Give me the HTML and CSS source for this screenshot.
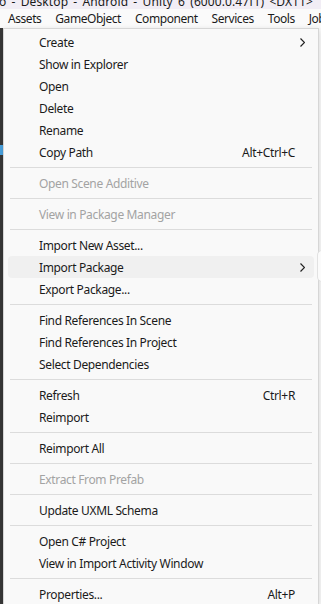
FILE: index.html
```html
<!DOCTYPE html>
<html>
<head>
<meta charset="utf-8">
<link rel="stylesheet" href="styles.css">
</head>
<body>
<div class="title"><span class="title-text">o - Desktop - Android - Unity 6 (6000.0.47f1) &lt;DX11&gt;</span></div>
<div class="menubar">
  <span class="mb-item">Assets</span>
  <span class="mb-item">GameObject</span>
  <span class="mb-item">Component</span>
  <span class="mb-item">Services</span>
  <span class="mb-item">Tools</span>
  <span class="mb-item">Jobs</span>
</div>
<div class="area">
  <div class="strip"><div class="strip-blue"></div></div>
  <div class="menu">
    <div class="item"><span class="label">Create</span><span class="sc"></span><span class="arrow"><svg width="5" height="9" viewBox="0 0 5 9"><polyline points="0.5,0.5 4.5,4.5 0.5,8.5" fill="none" stroke="#222" stroke-width="1.2"/></svg></span></div>
    <div class="item"><span class="label">Show in Explorer</span></div>
    <div class="item"><span class="label">Open</span></div>
    <div class="item"><span class="label">Delete</span></div>
    <div class="item"><span class="label">Rename</span></div>
    <div class="item"><span class="label">Copy Path</span><span class="sc">Alt+Ctrl+C</span><span class="arrow"></span></div>
    <div class="sep"></div>
    <div class="item disabled"><span class="label">Open Scene Additive</span></div>
    <div class="sep"></div>
    <div class="item disabled"><span class="label">View in Package Manager</span></div>
    <div class="sep"></div>
    <div class="item"><span class="label">Import New Asset...</span></div>
    <div class="item hover"><span class="label">Import Package</span><span class="sc"></span><span class="arrow"><svg width="5" height="9" viewBox="0 0 5 9"><polyline points="0.5,0.5 4.5,4.5 0.5,8.5" fill="none" stroke="#222" stroke-width="1.2"/></svg></span><span class="submenu-edge"></span></div>
    <div class="item"><span class="label">Export Package...</span></div>
    <div class="sep"></div>
    <div class="item"><span class="label">Find References In Scene</span></div>
    <div class="item"><span class="label">Find References In Project</span></div>
    <div class="item"><span class="label">Select Dependencies</span></div>
    <div class="sep"></div>
    <div class="item"><span class="label">Refresh</span><span class="sc">Ctrl+R</span><span class="arrow"></span></div>
    <div class="item"><span class="label">Reimport</span></div>
    <div class="sep"></div>
    <div class="item"><span class="label">Reimport All</span></div>
    <div class="sep"></div>
    <div class="item disabled"><span class="label">Extract From Prefab</span></div>
    <div class="sep"></div>
    <div class="item"><span class="label">Update UXML Schema</span></div>
    <div class="sep"></div>
    <div class="item"><span class="label">Open C# Project</span></div>
    <div class="item"><span class="label">View in Import Activity Window</span></div>
    <div class="sep"></div>
    <div class="item"><span class="label">Properties...</span><span class="sc">Alt+P</span><span class="arrow"></span></div>
  </div>
</div>
</body>
</html>
```
FILE: styles.css
```css
html, body {
  margin: 0;
  padding: 0;
}
body {
  width: 321px;
  height: 604px;
  overflow: hidden;
  background: #f9f9f9;
  font-family: "Noto Sans", "Open Sans", sans-serif;
  font-size: 12px;
  color: #1b1b1b;
}
.title {
  height: 9px;
  overflow: hidden;
  background: #f1edf5;
  display: flex;
  align-items: flex-end;
  white-space: nowrap;
}
.title-text {
  display: block;
  line-height: 16px;
  margin-bottom: -1px;
  margin-left: -1px;
  font-size: 12px;
  word-spacing: 2px;
  letter-spacing: 0.1px;
}
.menubar {
  height: 19px;
  background: #fafafa;
  display: flex;
  align-items: center;
  white-space: nowrap;
  padding-left: 1px;
  letter-spacing: -0.45px;
}
.mb-item {
  padding: 0 7px;
  line-height: 19px;
}
.area {
  display: flex;
  height: 576px;
}
.strip {
  width: 3px;
  background: #383838;
  display: flex;
  flex-direction: column;
}
.strip-blue {
  margin-top: 117px;
  height: 10px;
  background: #4aa3e0;
}
.menu {
  width: 314px;
  border: 1px solid #d6d6d6;
  border-bottom: none;
  background: #f9f9f9;
  padding-top: 2px;
  box-shadow: 0 2px 6px rgba(0,0,0,0.15);
  letter-spacing: -0.35px;
}
.item {
  position: relative;
  height: 22px;
  margin: 0 4px;
  padding-left: 31px;
  border-radius: 4px;
  display: flex;
  align-items: center;
  white-space: nowrap;
}
.label {
  flex: 1;
}
.sc {
  text-align: right;
}
.arrow {
  width: 19px;
  display: flex;
  align-items: center;
  padding-left: 5px;
  box-sizing: border-box;
}
.disabled {
  color: #a3a3a3;
}
.hover {
  background: #f0f0f0;
}
.submenu-edge {
  position: absolute;
  left: 309px;
  top: -6px;
  width: 12px;
  height: 30px;
  background: #fbfbfb;
  border: 1px solid #e2e2e2;
  border-radius: 5px;
}
.sep {
  height: 1px;
  background: #dcdcdc;
  margin: 4px 6px 4px 6px;
}
```
